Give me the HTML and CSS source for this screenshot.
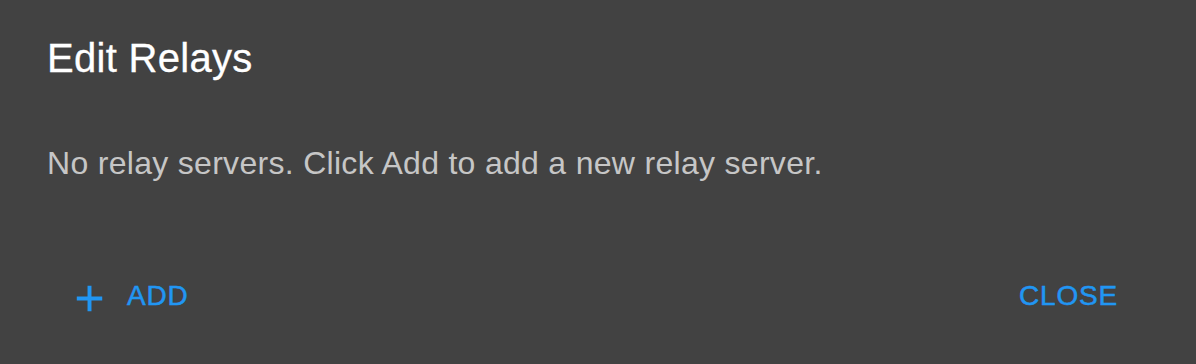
FILE: index.html
```html
<!DOCTYPE html>
<html>
<head>
<meta charset="utf-8">
<link rel="stylesheet" href="styles.css">
</head>
<body>
<div class="dialog">
  <h2 class="title">Edit Relays</h2>
  <p class="content">No relay servers. Click Add to add a new relay server.</p>
  <div class="actions">
    <button class="btn btn-add">
      <svg class="icon" viewBox="0 0 24 24" aria-hidden="true"><path d="M19.1 13.1h-6v6h-2.2v-6h-6v-2.2h6v-6h2.2v6h6z" fill="currentColor"/></svg>
      <span>ADD</span>
    </button>
    <button class="btn btn-close"><span>CLOSE</span></button>
  </div>
</div>
</body>
</html>
```
FILE: styles.css
```css
html, body {
  margin: 0;
  padding: 0;
  background: #424242;
}
body {
  font-family: "Liberation Sans", Arial, Helvetica, sans-serif;
  width: 1196px;
  height: 364px;
  overflow: hidden;
}
.dialog {
  display: flex;
  flex-direction: column;
  height: 364px;
  box-sizing: border-box;
}
.title {
  margin: 0;
  padding: 34px 48px 0 47px;
  font-size: 40px;
  line-height: 48px;
  font-weight: 400;
  color: #ffffff;
  letter-spacing: 0.3px;
  -webkit-text-stroke: 0.3px #ffffff;
}
.content {
  margin: 0;
  padding: 57px 48px 0 47px;
  font-size: 32px;
  line-height: 48px;
  color: #c6c6c6;
  letter-spacing: 0.3px;
}
.actions {
  display: flex;
  justify-content: space-between;
  align-items: center;
  padding: 85px 78px 0 68px;
}
.btn {
  display: flex;
  align-items: center;
  background: none;
  border: 0;
  padding: 0;
  margin: 0;
  font-family: inherit;
  font-size: 28px;
  line-height: 40px;
  letter-spacing: 0.8px;
  color: #2196f3;
  -webkit-text-stroke: 0.5px #2196f3;
  cursor: pointer;
}
.btn-add {
  gap: 16px;
}
.icon {
  width: 43px;
  height: 43px;
  display: block;
  margin-top: 5px;
}
```
